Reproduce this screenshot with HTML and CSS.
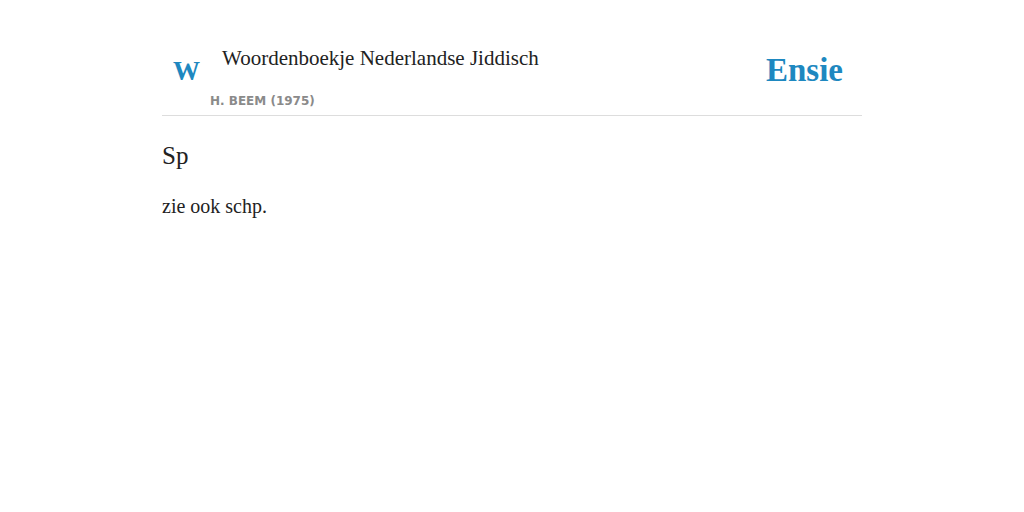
FILE: index.html
```html
<!DOCTYPE html>
<html lang="nl">
<head>
    <meta charset="UTF-8">
    <title>Sp - Woordenboekje Nederlandse Jiddisch</title>
    <link rel="stylesheet" href="styles.css">
</head>
<body>
    <div class="container">
        <div class="header">
            <div class="source">
                <div class="source-logo">W</div>
                <div class="source-text">
                    <div class="source-title">Woordenboekje Nederlandse Jiddisch</div>
                    <div class="source-author">H. Beem (1975)</div>
                </div>
            </div>
            <div class="brand">Ensie</div>
        </div>

        <h1 class="term">Sp</h1>
        <p class="definition">zie ook schp.</p>
    </div>
</body>
</html>
```

FILE: styles.css
```css
body {
    margin: 0;
    background: #fff;
    color: #222;
    font-family: "Liberation Serif", serif;
}
.container {
    width: 700px;
    margin: 0 auto;
    padding-top: 46px;
}
.header {
    display: flex;
    justify-content: space-between;
    border-bottom: 1px solid #ddd;
    padding-bottom: 7px;
}
.source {
    display: flex;
}
.source-logo {
    width: 37px;
    padding-left: 11px;
    padding-top: 10px;
    color: #1e88c0;
    font-weight: bold;
    font-size: 27px;
}
.source-title {
    font-size: 21px;
    margin-left: 12px;
}
.source-author {
    margin-top: 23px;
    font-family: "DejaVu Sans", sans-serif;
    font-weight: bold;
    font-size: 12px;
    color: #8a8a8a;
    text-transform: uppercase;
}
.brand {
    color: #1e88c0;
    font-weight: bold;
    font-size: 33px;
    padding-top: 6px;
    padding-right: 19px;
}
.term {
    font-weight: normal;
    font-size: 25px;
    margin: 26px 0 0;
}
.definition {
    font-size: 20px;
    margin: 25px 0 0;
}
```
